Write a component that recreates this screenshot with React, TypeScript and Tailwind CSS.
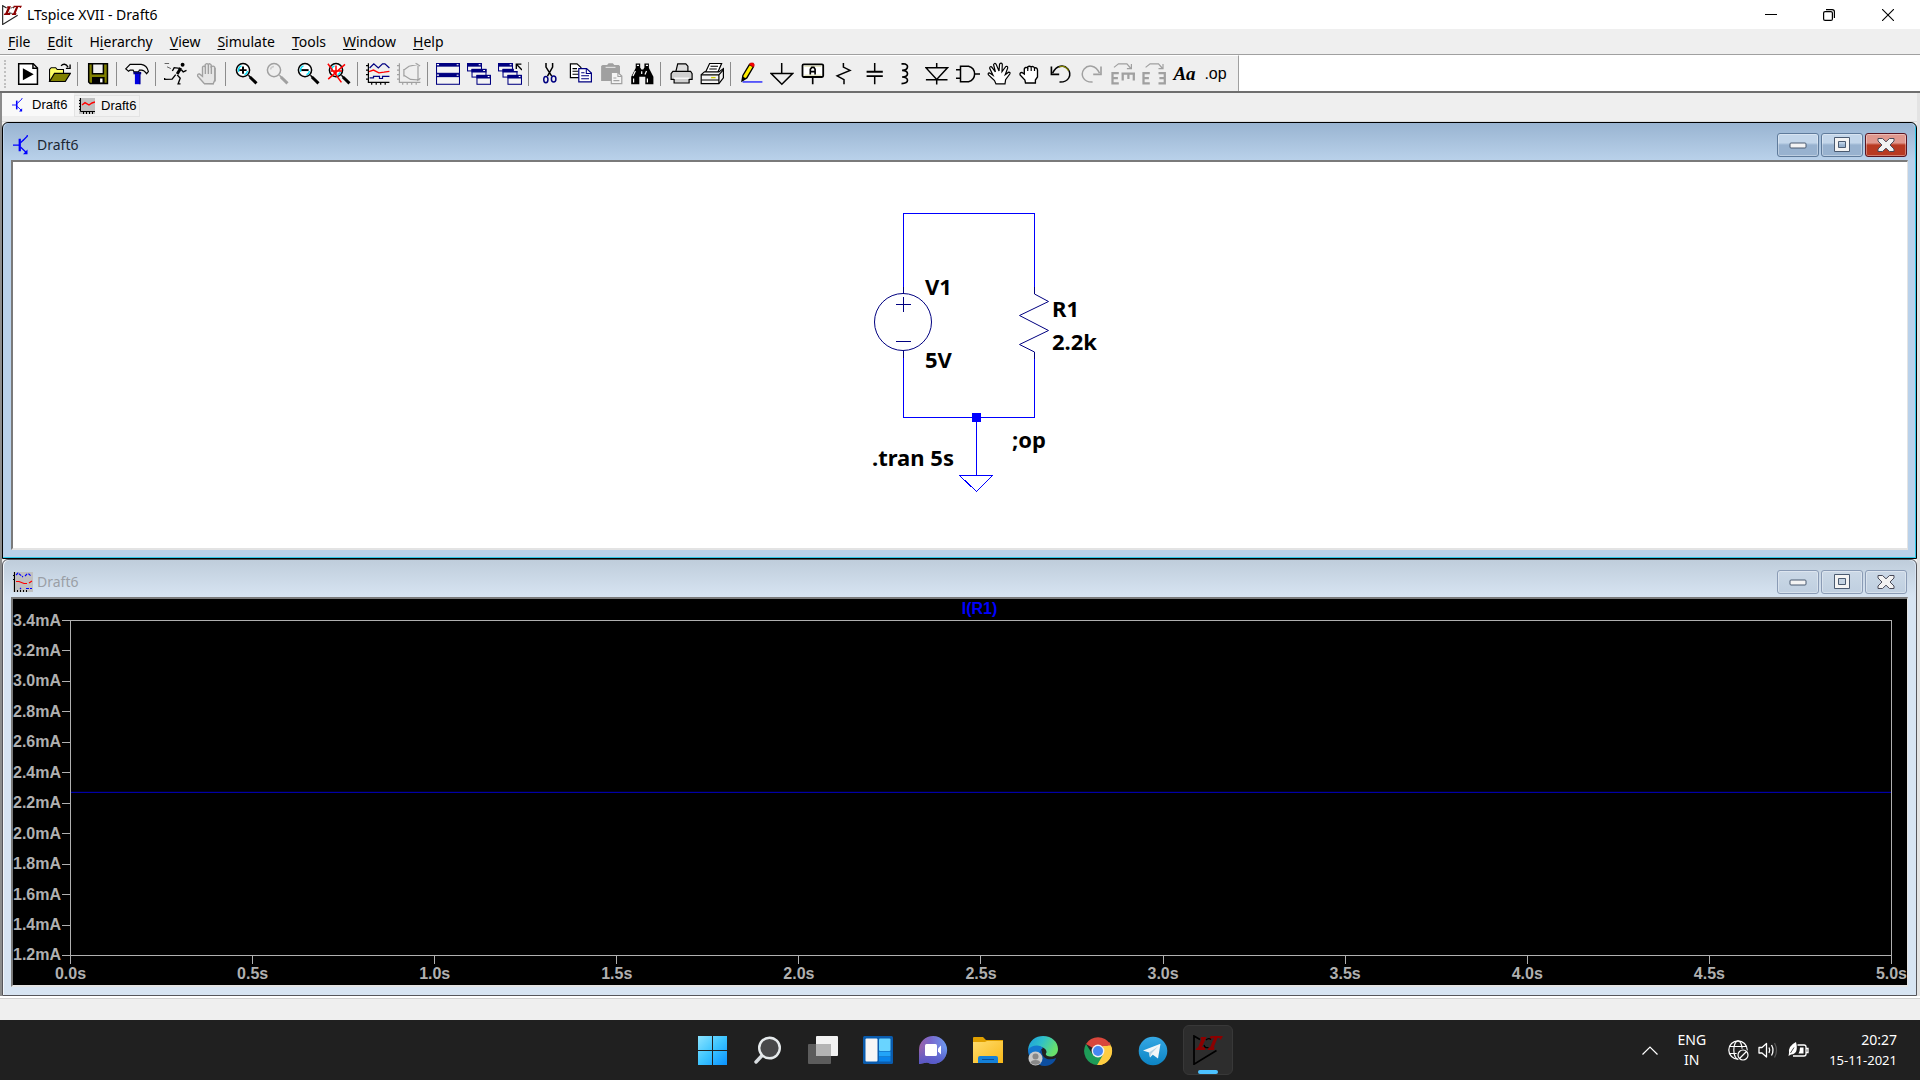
import type { ReactNode } from "react";

const UI = "font-['Noto_Sans','Open_Sans',sans-serif]";
const ARIAL = "font-['Liberation_Sans',Arial,sans-serif]";

function Px({ children }: { children: ReactNode }) {
  return (
    <svg viewBox="0 0 16 16" className="h-6 w-6" fill="none" stroke="#000" strokeWidth="1" aria-hidden="true">
      {children}
    </svg>
  );
}

const G = "#a0a0a0";

function Lens({ gray, children }: { gray?: boolean; children?: ReactNode }) {
  const c = gray ? G : "#000";
  return (
    <Px>
      <circle cx="6" cy="5.4" r="4.4" stroke={c} fill={gray ? "#efefef" : "#fff"} />
      {!gray && <path d="M3.2 6.5A3 3 0 0 1 5 2.6M7 8.4A3 3 0 0 0 9 6" stroke="#00e5ff" />}
      <path d="M9.6 8.8L11 10.2" stroke={c} />
      <path d="M10.6 10L15 14.2" stroke={c} strokeWidth="2" />
      {children}
    </Px>
  );
}

function MiniWin({ x, y, w, h }: { x: number; y: number; w: number; h: number }) {
  return (
    <>
      <rect x={x + 0.35} y={y + 0.35} width={w - 0.7} height={h - 0.7} stroke="#000080" strokeWidth=".7" fill="#f4f4f4" />
      <rect x={x} y={y} width={w} height="2.4" fill="#000080" stroke="none" />
      <path d={`M${x + w - 2.2} ${y + 1.1}h1.2`} stroke="#fff" strokeWidth=".7" />
    </>
  );
}

const Cascade = () => (
  <>
    <MiniWin x={0} y={0.7} w={10} h={5.6} />
    <MiniWin x={3} y={4.6} w={10} h={5.8} />
    <MiniWin x={6.3} y={8.6} w={9.7} h={6.6} />
  </>
);

const OpenHand = () => (
  <path
    d="M6 14.6L5 12.4L1 8.6Q.3 7.4 1.6 7.2L4 8.8L1.8 4.2Q1.8 2.8 3 3.2L5.6 6.6L4.4 1.8Q5 .4 6 1.4L8 6L8.4 1.4Q9.4 .2 10.2 1.4L10 6.4L12.6 3Q13.8 2.6 13.8 4L12.2 8.4L14.4 6.8Q15.8 6.8 15.2 8L12.4 11.8L12 14.6Z"
    fill="#fff"
    strokeWidth=".8"
  />
);

type Tool = { name: string; icon: ReactNode } | null;

const tools: Tool[] = [
  {
    name: "New schematic",
    icon: (
      <Px>
        <path d="M1.8 1.2H11.5L14.3 4V14.8H1.8Z" fill="#fff" />
        <path d="M11.3 1.2V4.2H14.3" />
        <path d="M4.6 4.2L11.8 8.2L4.6 12.2Z" fill="#000" stroke="none" />
      </Px>
    ),
  },
  {
    name: "Open",
    icon: (
      <Px>
        <path d="M1.7 12.8V5L2.8 3.8H5.8L6.8 5H11V7.4" fill="#ffff66" strokeWidth=".7" />
        <path d="M1.7 13L5 7.6H15.6L12.2 13Z" fill="#808000" strokeWidth=".8" />
        <path d="M9.4 2.6C10.6 1 12.8 1 14 3.4M15.4 1.6V4.2H12.6" strokeWidth=".9" />
      </Px>
    ),
  },
  null,
  {
    name: "Save",
    icon: (
      <Px>
        <path d="M1.8 1.2H14.3V14.3H2.8L1.8 13.3Z" fill="#808000" />
        <path d="M4.3 1.2H11.6V7.8H4.3Z" fill="#efefef" />
        <rect x="4" y="10" width="8.4" height="4.4" fill="#000" stroke="none" />
        <rect x="9.4" y="11" width="1.6" height="2.6" fill="#fff" stroke="none" />
      </Px>
    ),
  },
  null,
  {
    name: "Control panel",
    icon: (
      <Px>
        <path d="M.5 4.6L3.4 1.6H10.8Q14.6 2 15.6 6.4L14.4 7.8Q12.8 5.4 11 5.4H9.6L9 6.6H6L5.4 5.4H3.4L2.4 6.2Z" fill="#f4f4f4" strokeWidth=".8" />
        <path d="M5.6 6.6H10.8V8.2H5.6Z" fill="#000080" stroke="none" />
        <path d="M6.6 8V14.8H10.2V8Z" fill="#0000e0" stroke="none" />
        <path d="M9.9 8V14.8" stroke="#000080" strokeWidth=".7" />
      </Px>
    ),
  },
  null,
  {
    name: "Run",
    icon: (
      <Px>
        <circle cx="12.4" cy="1.8" r="1.3" fill="#000" stroke="none" />
        <path d="M11.2 4L8.8 8" strokeWidth="2" />
        <path d="M10.6 4.2L6.8 3.8L5.6 6M11.6 5.2L12.8 6.6L15 5.6M8.8 8.6L10.8 10.8L9.4 14.6H11M7.8 8.4L5.4 11.4L.4 11.6V10.6" strokeWidth=".9" />
        <path d="M.4 1H3.4M2 3.2L4.6 4.4" strokeWidth=".6" stroke="#555" />
      </Px>
    ),
  },
  {
    name: "Halt",
    icon: (
      <Px>
        <path d="M6 14.2L1.8 9.4Q1.4 7.8 3 8L5 9.6V3.4Q5.8 2.2 6.8 3.2V1.8Q7.8.4 8.8 1.6V1.6Q10 .6 10.8 2V3.2Q12.4 2.2 13.2 3.6V12L12.2 14.4Z" fill="#e6e6e6" stroke={G} strokeWidth=".9" />
        <path d="M6.9 3V8M8.9 2V8M10.9 2.6V8M13.4 4V13M6 14.6H12.6" stroke={G} strokeWidth=".9" />
      </Px>
    ),
  },
  null,
  { name: "Zoom in", icon: <Lens><path d="M3.6 5.4H8.4M6 3V7.8" strokeWidth="1.3" /></Lens> },
  { name: "Zoom area", icon: <Lens gray><path d="M3.6 5A2.6 2.6 0 0 1 6 3" stroke="#ccc" /></Lens> },
  { name: "Zoom out", icon: <Lens><path d="M3.6 5.4H8.4" strokeWidth="1.3" /></Lens> },
  {
    name: "Zoom full extents",
    icon: (
      <Lens>
        <path d="M.6 1.2L9.6 13.6M12 1.6L.8 11.4M2.4 6H10M6 2.4V8.4" stroke="#f00" strokeWidth="1" />
      </Lens>
    ),
  },
  null,
  {
    name: "Pick visible traces",
    icon: (
      <Px>
        <path d="M1.6 .8V13.6H15.6M0 2.4H1.6M0 5.4H1.6M0 8.4H1.6M0 11.4H1.6M3.8 13.6V15.2M6.8 13.6V15.2M9.8 13.6V15.2M12.8 13.6V15.2" strokeWidth=".8" />
        <path d="M2.4 4L5.2 1.2L8.2 4L11 1.2L12.6 1.2L15.6 4M2.4 10.6H5V9.6H9V11H11V9.6H15.6" stroke="#000080" strokeWidth=".8" />
        <path d="M2 6.4L5 5.4L8.6 7.2L12 6.8L15.6 6.2" stroke="#f00" strokeWidth=".9" />
      </Px>
    ),
  },
  {
    name: "Autorange",
    icon: (
      <Px>
        <path d="M1.6 .8V13.6H15.6M0 2.4H1.6M0 5.4H1.6M0 8.4H1.6M0 11.4H1.6M3.8 13.6V15.2M6.8 13.6V15.2M9.8 13.6V15.2M12.8 13.6V15.2M4.6 4.6V9.6M14 2.6V12M14 1.6L8 2.8L4.6 5.4M4.6 8.8L9 11.6L15 12M12.4 .8L15.4 2.6M13.4 12.6L15.6 10.8" stroke={G} strokeWidth=".8" />
      </Px>
    ),
  },
  null,
  {
    name: "Tile windows",
    icon: (
      <Px>
        <MiniWin x={0} y={0.7} w={16} h={7.2} />
        <MiniWin x={0} y={7.7} w={16} h={7.5} />
        <path d="M.6 1.8H2M.6 8.8H2" stroke="#fff" strokeWidth=".8" />
      </Px>
    ),
  },
  { name: "Cascade windows", icon: <Px><Cascade /></Px> },
  {
    name: "Close all windows",
    icon: (
      <Px>
        <Cascade />
        <rect x="10.6" y="0" width="5.4" height="6" fill="#efefef" stroke="none" />
        <path d="M12.2 4.6V1.4H15.6M12.4 1.6L16 5.4" strokeWidth=".9" />
      </Px>
    ),
  },
  null,
  {
    name: "Cut",
    icon: (
      <Px>
        <path d="M6 .7V3.4L9.8 9.4M10.4 .7V3.4L7 9.4" strokeWidth="1" />
        <ellipse cx="5.9" cy="11.7" rx="1.4" ry="2.1" stroke="#000080" />
        <ellipse cx="11.1" cy="11.4" rx="1.5" ry="2" stroke="#000080" />
      </Px>
    ),
  },
  {
    name: "Copy",
    icon: (
      <Px>
        <path d="M1.6 1.2H6L8.6 3.6V10.4H1.6Z" fill="#fff" strokeWidth=".8" />
        <path d="M3 4.4H6M3 6.2H7M3 8.2H7" strokeWidth=".7" />
        <path d="M7.2 4.4H12.4L15.6 7.4V13.2H7.2Z" fill="#fff" stroke="#000080" strokeWidth=".8" />
        <path d="M12.2 4.6V7.6H15.4M8.8 7.2H11M8.8 9.2H14M8.8 11.2H14" stroke="#000080" strokeWidth=".7" />
      </Px>
    ),
  },
  {
    name: "Paste",
    icon: (
      <Px>
        <path d="M1.4 2.6L2.4 2H5.4L6.4 .8H9.2L10.2 2H13.2L14 2.8V12.6H1.4Z" fill={G} stroke="none" />
        <path d="M4.4 3.6H11" stroke="#ddd" strokeWidth=".8" />
        <path d="M8.2 7H12.6L15.2 9.4V14.4H8.2Z" fill="#f4f4f4" stroke={G} strokeWidth=".8" />
        <path d="M12.6 7V9.6H15.2M9.6 10.6H11.6M9.6 12.4H13.6" stroke={G} strokeWidth=".7" />
      </Px>
    ),
  },
  {
    name: "Find",
    icon: (
      <Px>
        <path d="M3.8 1H6.8V3.6L7.6 5H8.8L9.6 3.6V1H12.6V4L15.6 9.8V14.8H10.2V9.8H6.2V14.8H.8V9.8L3.8 4Z" fill="#000" stroke="none" />
        <path d="M4.6 2.2H6M10.6 2.2H12M3.6 6L2 9.4M11 6L10 8.4M2.4 11V13.6M11.6 11V13.6M7.8 6.2V8" stroke="#fff" strokeWidth=".8" />
      </Px>
    ),
  },
  null,
  {
    name: "Print",
    icon: (
      <Px>
        <path d="M4.6 6.2L5.8 1.2H11.2L12.6 2.8V6.2" fill="#ddd" strokeWidth=".8" />
        <path d="M2.6 6.2H14.4L15.4 7.8V11.6H13.4V14H3.4V11.6H1.4V7.8Z" fill="#d0d0d0" strokeWidth=".8" />
        <path d="M3.2 10.8H13.6" stroke="#fff" strokeWidth=".8" />
      </Px>
    ),
  },
  {
    name: "Print setup",
    icon: (
      <Px>
        <path d="M3.6 7L6.4 1H14.4L11.8 7" fill="#fff" strokeWidth=".8" />
        <path d="M7 2.8H12M6.2 4.6H11.2" strokeWidth=".7" />
        <path d="M.8 8.4L3 6.6H12.6L15.6 4.4V10.6L12.6 14.4H.8Z" fill="#f4f4f4" strokeWidth=".8" />
        <path d="M.8 8.6H12.6V14.2M12.6 8.6L15.4 5.4M1 12H12.4" strokeWidth=".8" />
        <path d="M7.4 10.4H10.4" stroke="#cccc00" strokeWidth=".9" />
      </Px>
    ),
  },
  null,
  {
    name: "Draw wire",
    icon: (
      <Px>
        <path d="M2 12.6L2.6 9L7 1.6L9.6 3.2L5.2 10.6Z" fill="#ffee00" strokeWidth=".9" />
        <path d="M7 1.6L7.6 .7H9.6L10.2 2L9.6 3.4Z" fill="#f00" stroke="#c00" strokeWidth=".5" />
        <path d="M2 12.8L2.6 9.6L4.6 11Z" fill="#000" stroke="none" />
        <path d="M2.4 13.3H15.6" stroke="#0000ff" strokeWidth=".8" />
      </Px>
    ),
  },
  { name: "Place ground", icon: <Px><path d="M7.8 .7V7.6M.6 7.6H15.2L7.9 14.8Z" /></Px> },
  {
    name: "Label net",
    icon: (
      <Px>
        <rect x="1" y="1.6" width="13.8" height="8.4" rx=".8" fill="#fff" strokeWidth="1.2" />
        <path d="M2.2 2.8H13.6M2.2 8.8H13.6" stroke="#cccc88" strokeWidth=".5" />
        <path d="M6.2 8.4V4.8L7.2 3.6H8.6L9.4 4.8V8.4M6.2 6.4H9.4M7.8 10V14.8" strokeWidth="1.1" />
      </Px>
    ),
  },
  { name: "Resistor", icon: <Px><path d="M7.6 .7V3.4L12 5.6L3.4 9.2L8 11.8V14.8" /></Px> },
  { name: "Capacitor", icon: <Px><path d="M7.8 .7V6.4M7.8 9.6V14.8" /><path d="M2.4 6.5H13.2M2.4 9.4H13.2" strokeWidth="1.3" /></Px> },
  { name: "Inductor", icon: <Px><path d="M5 1.2H6.2Q9 1.4 9 3.2Q9 5.4 5.4 5.6Q9 5.8 9 7.8Q9 9.8 5.4 10Q9 10.2 9 12.2Q9 14.2 5 14.4" strokeWidth="1.1" /></Px> },
  { name: "Diode", icon: <Px><path d="M.6 3.8H15L7.8 11.6ZM.6 11.8H15M7.8 .7V3.8M7.8 11.8V15" /></Px> },
  { name: "Component", icon: <Px><path d="M3 2.8H8.4Q12.4 4 12.4 8Q12.4 12 8.4 13.2H3ZM-.4 5.2H3M-.4 10.8H3M12.4 8H16" /></Px> },
  { name: "Move", icon: <Px><OpenHand /></Px> },
  {
    name: "Drag",
    icon: (
      <Px>
        <path d="M5 14L4.6 12L1.4 8.6Q1 7 2.6 7L4.2 8V4.6Q5 3 6.4 4V3.4Q7.6 2.2 8.8 3.4Q10 2.4 11 4Q12.8 3.4 13 5.4V10L11.6 12V14Z" fill="#fff" strokeWidth=".9" />
        <path d="M6.5 4V6M8.8 3.6V6M11 4V6" strokeWidth=".8" />
      </Px>
    ),
  },
  {
    name: "Undo",
    icon: (
      <Px>
        <path d="M2.4 7.4C5 2 10 1.6 12.6 4.6C15.4 8.4 13.4 13.6 7 13.4" strokeWidth="1" />
        <path d="M6.6 3.4C9 2.4 11.4 3 13 5.8" stroke="#808000" strokeWidth=".9" />
        <path d="M1.6 3V8.2H6.8" strokeWidth="1.1" />
      </Px>
    ),
  },
  {
    name: "Redo",
    icon: (
      <Px>
        <path d="M13 7.4C10.4 2 5.4 1.6 2.8 4.6C0 8.4 2 13.6 8.4 13.4" stroke={G} strokeWidth="1" />
        <path d="M14 3V8.2H8.8" stroke={G} strokeWidth="1.1" />
      </Px>
    ),
  },
  {
    name: "Rotate",
    icon: (
      <Px>
        <path d="M2 3.6L5 1.2H10.6L13 4M13.6 1.4V4.4H10.6" stroke={G} strokeWidth=".8" />
        <path d="M1 6.6V15M.4 7.4H5.2M.4 10.8H4.6M.4 14.2H5.2M7 7.8H16M7.8 7V12.4M11.6 7V11.4M15.2 7V12.4" stroke={G} strokeWidth="1.5" />
      </Px>
    ),
  },
  {
    name: "Mirror",
    icon: (
      <Px>
        <path d="M2.4 3.6L5.4 1.2H11L13.4 4M14 1.4V4.4H11" stroke={G} strokeWidth=".8" />
        <path d="M1 6.6V15M.4 7.4H5.2M.4 10.8H4.6M.4 14.2H5.2M15.2 6.6V15M15.8 7.4H11M15.8 10.8H11.6M15.8 14.2H11" stroke={G} strokeWidth="1.5" />
      </Px>
    ),
  },
  { name: "Text", icon: <span className="font-['Liberation_Serif',serif] text-[19px] leading-6 font-bold italic">Aa</span> },
  { name: "SPICE directive", icon: <span className="font-['Liberation_Sans',sans-serif] text-[16px] leading-5">.op</span> },
];

const menus = ["File", "Edit", "Hierarchy", "View", "Simulate", "Tools", "Window", "Help"];

function LtLogo({ className, line }: { className: string; line: string }) {
  return (
    <svg viewBox="0 0 30 30" className={className} aria-hidden="true">
      <path d="M7 4.500L1 1V29.200L23.500 15.500" fill="none" stroke={line} strokeWidth="1.700" />
      <path d="M8 2H13.500L9 12H13L12 15H2.500L4 12.500H5L8.500 4H7.500Z" fill="#8b0000" />
      <path d="M17.500 1H30L28 4.500H26.500L26.800 3H24.500L20.500 12.500H22L20.800 15H14.500L15.700 12.500H17L21 3H19.500L17.800 4.500H16.500Z" fill="#8b0000" />
      <path d="M13 5Q15.500 2.500 18 4.500M11 10Q12 13.500 15.500 12.500" fill="none" stroke={line} strokeWidth="1.200" />
    </svg>
  );
}

function TransistorIcon({ className }: { className: string }) {
  return (
    <svg viewBox="0 0 16 16" className={`shrink-0 ${className}`} fill="none" stroke="#0000ff" aria-hidden="true">
      <path d="M0 8H5M8 4.4L11.4 1V0" strokeWidth="1" />
      <path d="M5.4 3V13" strokeWidth="1.8" />
      <path d="M6 6.2L8.4 4M6 9.6L10.6 14" strokeWidth="1" />
      <path d="M11.6 15.4H8L11.6 11.6Z" fill="#0000ff" stroke="none" />
    </svg>
  );
}

function PlotTabIcon() {
  return (
    <svg viewBox="0 0 16 16" className="h-4 w-4 shrink-0" aria-hidden="true">
      <path d="M0 0H16V16H0Z" fill="#c0c0c0" />
      <path d="M1.5 0V13.5H16M0 2.5H2M0 5.5H2M0 8.5H2M0 11.5H2M4.5 13V16M7.5 13V16M10.5 13V16M13.5 13V16" stroke="#000" fill="none" />
      <path d="M3 7L6 4.6L10 7L13 5L16 4" stroke="#f00" fill="none" strokeWidth="1.4" />
    </svg>
  );
}

function PlotWinIcon() {
  return (
    <svg viewBox="0 0 20 20" className="h-5 w-5 shrink-0" aria-hidden="true">
      <path d="M0 0H20V20H0Z" fill="#c0c0c0" />
      <path d="M1.5 0V20M0 3.5H2M0 7.5H2M4.5 18V20M7.5 18V20M10.5 18V20M13.5 18V20" stroke="#000" fill="none" />
      <path d="M3 3L5 1L10 5M12 4L14 2H16L18 4M7 17L8 16M13 16.5H19" stroke="#00f" fill="none" strokeWidth="1.1" strokeDasharray="3 1" />
      <path d="M3 9.5H6L11 11.5H14M16 11L19 9" stroke="#f00" fill="none" strokeWidth="1.2" />
    </svg>
  );
}

function WinButtons({ active }: { active: boolean }) {
  const base = active
    ? "bg-linear-to-b from-[#c3d6ea] from-40% to-[#98b2cf] to-50% border-[#5f7b9b]"
    : "bg-linear-to-b from-[#cbd8e6] to-[#bfcfe0] border-[#8a9bb5]";
  const close = active ? "bg-linear-to-b from-[#e0988e] from-40% to-[#b83a22] to-50% border-[#5a1420]" : base;
  const box = "flex h-6 w-[42px] items-center justify-center rounded-[3px] border shadow-[inset_0_0_0_1px_rgba(255,255,255,0.35)]";
  return (
    <div className="flex gap-0.5">
      <button aria-label="Minimize" className={`${box} ${base}`}>
        <svg viewBox="0 0 18 16" className="h-4 w-[18px]"><rect x="1" y="6" width="16" height="5" rx="1" fill="#f4f4f4" stroke="#4a5a70" /></svg>
      </button>
      <button aria-label="Maximize" className={`${box} ${base}`}>
        <svg viewBox="0 0 18 16" className="h-4 w-[18px]">
          <path fillRule="evenodd" d="M1.5.5H16.5V14.5H1.5ZM5.5 4.5V10.5H12.5V4.5Z" fill="#f4f4f4" stroke="#4a5a70" />
        </svg>
      </button>
      <button aria-label="Close" className={`${box} ${close}`}>
        <svg viewBox="0 0 18 16" className="h-4 w-[18px]">
          <path d="M1 1.5H5.5L9 4.8L12.5 1.5H17V4L13 8L17 12V14.5H12.5L9 11.2L5.5 14.5H1V12L5 8L1 4Z" fill="#f2f2f2" stroke="#4a4a58" strokeLinejoin="round" />
        </svg>
      </button>
    </div>
  );
}

function MdiWindow({ active, icon, children }: { active: boolean; icon: ReactNode; children: ReactNode }) {
  const frame = active
    ? "bg-[#b9d1ea] border-black shadow-[inset_-1px_-1px_0_#2fc8e8]"
    : "bg-[#d7e4f2] border-[#55555a] shadow-[inset_1px_1px_0_#f2f6fa]";
  const bar = active ? "bg-linear-to-b from-[#99b4d1] to-[#b9d1ea] text-[#1c2733]" : "bg-linear-to-b from-[#bfcddb] to-[#d7e4f2] text-[#9a9fa6]";
  return (
    <section className={`flex min-h-0 flex-1 flex-col rounded-t-md border pb-2 ${frame}`}>
      <header className={`mx-px flex h-[37px] shrink-0 items-center rounded-t-md pt-[7px] pr-2 pl-[9px] ${bar}`}>
        {icon}
        <h2 className={`ml-1 flex-1 text-[14px] leading-5 ${UI}`}>Draft6</h2>
        <WinButtons active={active} />
      </header>
      <div className="mx-2 flex min-h-0 flex-1 flex-col border-t-2 border-r border-b-2 border-l-2 border-t-[#7a7a7a] border-r-[#e3e3e3] border-b-[#e3e3e3] border-l-[#7a7a7a]">
        {children}
      </div>
    </section>
  );
}

function Schematic() {
  return (
    <div className="flex min-h-0 flex-1 bg-white">
      <svg viewBox="13 162 1894 386" className="h-full w-full" fill="none" aria-label="Circuit schematic">
        <g stroke="#0000ff" shapeRendering="crispEdges">
          <path d="M903.5 289V213.5H1034.5V287M903.5 358V417.5H1034.5V359M976.5 417V475.5" />
          <path d="M959.5 475.5H992.5L976.5 491.5Z" />
          <rect x="972" y="413" width="9" height="9" fill="#0000ff" stroke="none" />
        </g>
        <g stroke="#000080">
          <path d="M903.5 287V294M903.5 351V358M1034.5 287V294L1048.5 301.5L1019.5 315.5L1048.5 330.5L1019.5 344.5L1034.5 352V359" />
          <circle cx="903" cy="322" r="28.5" />
          <path d="M896 304.5H911M903.5 297V312M896 341.5H911" />
        </g>
        <g className="font-['Noto_Sans','Open_Sans',sans-serif] text-[22px] font-bold" fill="#000">
          <text x="925" y="295">V1</text>
          <text x="925" y="368">5V</text>
          <text x="1052" y="317">R1</text>
          <text x="1052" y="350">2.2k</text>
          <text x="872" y="466">.tran 5s</text>
          <text x="1012" y="448">;op</text>
        </g>
      </svg>
    </div>
  );
}

const yTicks = ["3.4mA", "3.2mA", "3.0mA", "2.8mA", "2.6mA", "2.4mA", "2.2mA", "2.0mA", "1.8mA", "1.6mA", "1.4mA", "1.2mA"];
const xTicks = ["0.0s", "0.5s", "1.0s", "1.5s", "2.0s", "2.5s", "3.0s", "3.5s", "4.0s", "4.5s", "5.0s"];

function Waveform() {
  return (
    <div className={`flex min-h-0 flex-1 flex-col bg-black pr-[15px] text-[16px] leading-5 font-bold text-[#b0b0b0] ${ARIAL}`}>
      <h3 className="h-[21px] pl-[54px] text-center text-[#0000ff]">I(R1)</h3>
      <div className="flex min-h-0 flex-1">
        <div className="flex w-[57px] flex-col justify-between">
          {yTicks.map((t) => (
            <div key={t} className="flex h-px items-center justify-end">
              <span className="pr-px">{t}</span>
              <span className="h-px w-2 bg-[#b0b0b0]" />
            </div>
          ))}
        </div>
        <div className="min-w-0 flex-1 border border-[#b0b0b0]">
          <svg className="block h-full w-full" viewBox="0 0 100 100" preserveAspectRatio="none" aria-label="I(R1) trace">
            <path d="M0 51.3H100" stroke="#0000c8" vectorEffect="non-scaling-stroke" shapeRendering="crispEdges" />
          </svg>
        </div>
      </div>
      <div className="ml-[57px] flex h-[29px] justify-between">
        {xTicks.map((t) => (
          <div key={t} className="flex w-px flex-col items-center">
            <span className="h-2 w-px shrink-0 bg-[#b0b0b0]" />
            <span>{t}</span>
          </div>
        ))}
      </div>
    </div>
  );
}

const taskIcons: { name: string; icon: ReactNode }[] = [
  {
    name: "Start",
    icon: (
      <svg viewBox="0 0 30 30" className="h-[30px] w-[30px]">
        <defs>
          <linearGradient id="win" x1="0" y1="0" x2="1" y2="1"><stop stopColor="#8ce4ff" /><stop offset=".5" stopColor="#3cc4ff" /><stop offset="1" stopColor="#0a92ff" /></linearGradient>
        </defs>
        <path d="M0 0H14V14H0ZM15 0H29V14H15ZM0 15H14V29H0ZM15 15H29V29H15Z" fill="url(#win)" />
      </svg>
    ),
  },
  {
    name: "Search",
    icon: (
      <svg viewBox="0 0 30 30" className="h-[30px] w-[30px]">
        <path d="M9.5 19L3 26" stroke="#d8dce0" strokeWidth="3.4" strokeLinecap="round" />
        <circle cx="16.5" cy="12" r="10.3" fill="#48484a" stroke="#e6eaec" strokeWidth="2.4" />
      </svg>
    ),
  },
  {
    name: "Task view",
    icon: (
      <svg viewBox="0 0 30 30" className="h-[30px] w-[30px]">
        <rect x="8" y="0" width="22" height="20" rx="1" fill="#f2f2f2" />
        <rect x="0" y="8" width="23" height="20" rx="1" fill="#5c5c5c" />
        <path d="M8 8H23V20H8Z" fill="#b4b4b4" />
      </svg>
    ),
  },
  {
    name: "Widgets",
    icon: (
      <svg viewBox="0 0 30 30" className="h-[30px] w-[30px]">
        <rect x="0" y="0" width="30" height="28" rx="1.5" fill="#0a5cae" />
        <rect x="2.5" y="2.5" width="12" height="23" rx="1" fill="#f6f6f6" />
        <rect x="16" y="2.5" width="11.5" height="12.5" rx="1" fill="#69d4ff" />
        <rect x="16" y="15.5" width="11.5" height="5" fill="#22a4f8" />
        <rect x="16" y="21" width="11.5" height="4.5" fill="#0a84ea" />
      </svg>
    ),
  },
  {
    name: "Chat",
    icon: (
      <svg viewBox="0 0 30 30" className="h-[30px] w-[30px]">
        <defs>
          <linearGradient id="chat" x1="0" y1="0" x2="1" y2="0"><stop stopColor="#9a62a8" /><stop offset=".4" stopColor="#7a68cc" /><stop offset="1" stopColor="#6a9af0" /></linearGradient>
          <linearGradient id="chat2" x1="0" y1="0" x2="0" y2="1"><stop offset=".4" stopColor="#5558c8" stopOpacity="0" /><stop offset="1" stopColor="#5558c8" /></linearGradient>
        </defs>
        <path d="M15 0A14 14 0 1 1 9 26.6L1 28V14A14 14 0 0 1 15 0Z" fill="url(#chat)" />
        <path d="M15 0A14 14 0 1 1 9 26.6L1 28V14A14 14 0 0 1 15 0Z" fill="url(#chat2)" />
        <rect x="7" y="8" width="12" height="12" rx="1.5" fill="#fff" />
        <path d="M20 12.5L23 9.5V18.5L20 15.5Z" fill="#fff" />
      </svg>
    ),
  },
  {
    name: "File Explorer",
    icon: (
      <svg viewBox="0 0 30 30" className="h-[30px] w-[30px]">
        <defs><linearGradient id="fold" x1="0" y1="0" x2="1" y2="1"><stop stopColor="#ffdc6c" /><stop offset="1" stopColor="#f8b818" /></linearGradient></defs>
        <path d="M0 2Q0 1 1 1H10L13 4H30V12H0Z" fill="#e0a000" />
        <path d="M0 6H12L14 5H30V27H0Z" fill="url(#fold)" />
        <path d="M5 27V22Q5 20 7 20H23Q25 20 25 22V27Z" fill="#1480d8" />
        <path d="M9 23.5H21" stroke="#0a4c94" />
      </svg>
    ),
  },
  {
    name: "Microsoft Edge",
    icon: (
      <svg viewBox="0 0 30 30" className="h-[30px] w-[30px]">
        <defs>
          <linearGradient id="edge" x1="0" y1="0" x2="1" y2=".4"><stop stopColor="#1a9ce0" /><stop offset=".5" stopColor="#30c0c8" /><stop offset="1" stopColor="#68e06c" /></linearGradient>
        </defs>
        <path d="M0 13C2 22 8 30 17 30C23 30 27 26 28 22C22 25 14 23 14 16C14 11 6 8 0 13Z" fill="#0c4ea0" />
        <path d="M0 14C1 4 8 0 15 0C24 0 30 6 30 13C30 18 26 21 22 20.5C18 20 17 18.5 18.5 16.5C19 11 10 8 0 14Z" fill="url(#edge)" />
        <path d="M0 14C4 8 13 9 15 12C11 14 10 20 14 26C6 28 0 22 0 14Z" fill="#1478d0" />
        <circle cx="7.5" cy="22.5" r="7" fill="#c8c8c8" />
        <circle cx="7.5" cy="20.5" r="3" fill="#888" />
        <path d="M2.5 27Q3 24 7.5 24Q12 24 12.5 27Q7.5 30.5 2.5 27Z" fill="#888" />
      </svg>
    ),
  },
  {
    name: "Google Chrome",
    icon: (
      <svg viewBox="0 0 30 30" className="h-[30px] w-[30px]">
        <path d="M15 15L3 7.9A14 14 0 0 1 27 8Z" fill="#d9473c" />
        <path d="M15 15L27.1 8A14 14 0 0 1 14 29Z" fill="#ffcd42" />
        <path d="M15 15L14.5 29A14 14 0 0 1 3 7.9L10 19Z" fill="#1e9c58" />
        <path d="M9 18L14.5 29L20.5 19Z" fill="#1e9c58" />
        <path d="M20.5 18L14.2 29A14 14 0 0 0 28 10L20 10Z" fill="#ffcd42" />
        <path d="M15 8H27.1" stroke="#d9473c" strokeWidth="3" />
        <circle cx="15" cy="15" r="6.4" fill="#f0f0f0" />
        <circle cx="15" cy="15" r="5" fill="#4688f2" />
      </svg>
    ),
  },
  {
    name: "Telegram",
    icon: (
      <svg viewBox="0 0 30 30" className="h-[30px] w-[30px]">
        <defs><linearGradient id="tg" x1="0" y1="0" x2="0" y2="1"><stop stopColor="#36a8e4" /><stop offset="1" stopColor="#0c84c4" /></linearGradient></defs>
        <circle cx="15" cy="15" r="14.3" fill="url(#tg)" />
        <path d="M5 14.5L22.5 7.8L20 22.5L14.8 18.8L12 21.5L11 16.5Z" fill="#f2f6f8" />
        <path d="M11 16.5L20 10.5L13.5 17.6L12 21.5Z" fill="#b8d4e4" />
      </svg>
    ),
  },
];

export default function App() {
  return (
    <div className={`flex h-screen min-h-[600px] flex-col overflow-hidden bg-[#efefef] text-black ${UI}`}>
      <header className="flex h-[29px] shrink-0 items-center bg-white pr-0.5 pl-0.5">
        <LtLogo className="h-5 w-5" line="#222" />
        <h1 className="ml-[5px] flex-1 text-[14px] leading-5">LTspice XVII - Draft6</h1>
        <div className="flex h-full">
          <button aria-label="Minimize" className="flex w-[58px] items-center justify-center">
            <svg viewBox="0 0 12 12" className="h-3 w-3" stroke="#000"><path d="M0 5.5H12" /></svg>
          </button>
          <button aria-label="Restore" className="flex w-[58px] items-center justify-center">
            <svg viewBox="0 0 12 12" className="h-3 w-3" stroke="#000" fill="none" strokeWidth="1.2">
              <rect x=".6" y="2.6" width="8.8" height="8.8" rx="1.5" />
              <path d="M3 .6H9.2Q11.4.6 11.4 2.8V9" />
            </svg>
          </button>
          <button aria-label="Close" className="flex w-[60px] items-center justify-center">
            <svg viewBox="0 0 12 12" className="h-3 w-3" stroke="#000" strokeWidth="1.1"><path d="M0 0L12 12M12 0L0 12" /></svg>
          </button>
        </div>
      </header>

      <nav className="flex h-[26px] shrink-0 items-center gap-[17px] border-b border-[#a0a0a0] pl-2 text-[14px] leading-5">
        {menus.map((m) => {
          const i = m === "Hierarchy" ? 1 : 0;
          return (
            <button key={m}>
              {m.slice(0, i)}
              <span className="underline underline-offset-2">{m[i]}</span>
              {m.slice(i + 1)}
            </button>
          );
        })}
      </nav>

      <div className="flex h-[38px] shrink-0 border-b-2 border-[#6e6e6e] bg-white">
        <div role="toolbar" aria-label="Main" className="flex items-center border-t border-r border-t-white border-r-[#a0a0a0] bg-[#efefef] pr-[7px] pl-1">
          <span className="mr-1.5 h-7 w-0.5 border-l-2 border-dotted border-[#c0c0c0]" />
          {tools.map((t, i) =>
            t ? (
              <button key={t.name} aria-label={t.name} className="flex h-7 w-[31px] items-center justify-center">
                {t.icon}
              </button>
            ) : (
              <span key={i} className="mr-1 ml-[3px] h-6 w-px bg-[#8c8c8c]" />
            ),
          )}
        </div>
      </div>

      <div className="flex min-h-0 flex-1 flex-col border-r-3 border-l-2 border-r-[#e3e3e3] border-l-[#8c8c8c]">
        <div role="tablist" className={`flex h-[29px] shrink-0 items-start border-b border-[#dcdcdc] text-[13px] leading-4 ${ARIAL}`}>
          <button role="tab" aria-selected="true" className="flex h-[23px] w-[72px] items-center gap-1.5 bg-[#f9f9f9] pl-2.5">
            <TransistorIcon className="h-3.5 w-3.5" />
            Draft6
          </button>
          <button role="tab" aria-selected="false" className="mt-0.5 flex h-[22px] w-[66px] items-center gap-1.5 border border-[#e3e3e3] bg-[#f2f2f2] pl-1">
            <PlotTabIcon />
            Draft6
          </button>
        </div>
        <main className="flex min-h-0 flex-1 flex-col">
          <MdiWindow active icon={<TransistorIcon className="h-5 w-5" />}>
            <Schematic />
          </MdiWindow>
          <MdiWindow active={false} icon={<PlotWinIcon />}>
            <Waveform />
          </MdiWindow>
        </main>
      </div>

      <div role="status" className="h-6 shrink-0 border-t-2 border-t-white shadow-[inset_0_1px_0_#d0d0d0]" />

      <footer className="flex h-[60px] shrink-0 items-center bg-[#202020] text-white">
        <div className="w-[300px]" />
        <div className="flex flex-1 items-center justify-center gap-[5px]">
          {taskIcons.map((t) => (
            <button key={t.name} aria-label={t.name} className="flex h-[50px] w-[50px] items-center justify-center pt-0.5">
              {t.icon}
            </button>
          ))}
          <button aria-label="LTspice" className="flex h-[50px] w-[50px] flex-col items-center justify-end rounded-md border border-[#383838] bg-[#2d2d2d]">
            <LtLogo className="h-[30px] w-[30px]" line="#000" />
            <span className="mt-[5px] h-1 w-5 rounded-full bg-[#4cc2ff]" />
          </button>
        </div>
        <div className="flex w-[300px] items-center justify-end pr-[23px]">
          <button aria-label="Show hidden icons">
            <svg viewBox="0 0 16 9" className="h-[9px] w-4" fill="none" stroke="#fff" strokeWidth="1.2"><path d="M.5 8.5L8 1L15.5 8.5" /></svg>
          </button>
          <button className="ml-5 text-center text-[14px] leading-5">ENG<br />IN</button>
          <button aria-label="Network, volume and battery" className="ml-[22px] flex items-center gap-[9px]">
            <svg viewBox="0 0 21 21" className="h-[21px] w-[21px]" fill="none" stroke="#fff" strokeWidth="1.2">
              <circle cx="10" cy="10" r="9.2" />
              <ellipse cx="10" cy="10" rx="4.2" ry="9.2" />
              <path d="M1.5 6.5H18.5M1.5 13.5H10" />
              <circle cx="15" cy="15" r="6.5" fill="#202020" stroke="none" />
              <circle cx="15" cy="15" r="5" />
              <path d="M11.5 18.5L18.5 11.5" />
            </svg>
            <svg viewBox="0 0 21 21" className="h-[21px] w-[21px]" fill="none" stroke="#fff" strokeWidth="1.3">
              <path d="M1 7.5H4L8.5 3.5V17L4 13H1Z" strokeLinejoin="round" />
              <path d="M11 7.5Q12.5 10.3 11 13M13.5 5Q16.5 10.3 13.5 15.5" />
              <path d="M16.5 3Q20.5 10.3 16.5 17.5" stroke="#555" />
            </svg>
            <svg viewBox="0 0 21 21" className="h-[21px] w-[21px]" fill="none" stroke="#fff" strokeWidth="1.3">
              <path d="M9.5 5H16Q18 5 18 7V14Q18 16 16 16H5M18.5 8.5H20V12.5H18.5" />
              <path d="M12 7.5H15.5V13.5H10.5Q12 11 12 7.5" fill="#fff" stroke="none" />
              <path d="M8 2Q0 6 1 13L.5 16L3 14.5Q11 14 8 2Z" fill="#fff" stroke="none" />
              <path d="M2.5 13L6 7.5" stroke="#202020" strokeWidth=".8" />
            </svg>
          </button>
          <button className="ml-5 text-right text-[14px] leading-5">20:27<br /><span className="text-[13px]">15-11-2021</span></button>
        </div>
      </footer>
    </div>
  );
}
